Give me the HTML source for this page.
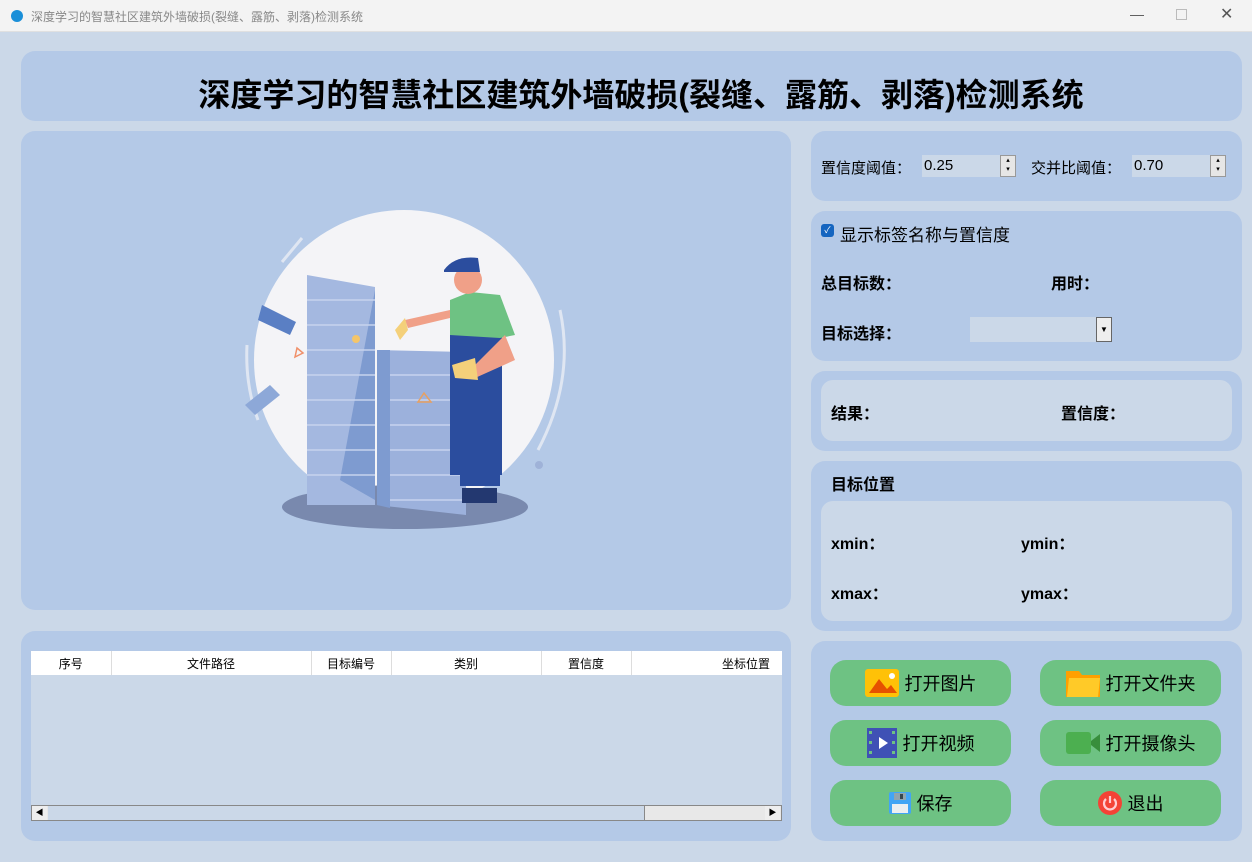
<!DOCTYPE html>
<html><head><meta charset="utf-8"><style>
*{margin:0;padding:0;box-sizing:border-box}
body{width:1252px;height:862px;background:#cbd8e8;font-family:"Liberation Sans","Noto Sans CJK SC",sans-serif;position:relative;overflow:hidden;color:#000}
.tb{position:absolute;left:0;top:0;width:1252px;height:32px;background:#f3f3f3;border-bottom:1px solid #e0e0e0}
.tb .t{position:absolute;left:31px;top:8px;font-size:12px;color:#888}
.tb .ic{position:absolute;left:11px;top:10px;width:12px;height:12px;border-radius:50%;background:#1a8fd8}
.p{position:absolute;background:#b4c9e7;border-radius:14px}
.in{position:absolute;background:#cbd8e8;border-radius:12px}
.a{position:absolute;white-space:nowrap}
.b{font-weight:bold;font-size:16px}
.spin{position:absolute;background:#cbd8e8;height:22px;font-size:15px;padding:2px 2px}
.sb{position:absolute;width:16px;height:22px;background:#e6e6e6;border:1px solid #999;font-size:7px;line-height:9px;text-align:center}
.btn{position:absolute;width:181px;height:46px;background:#6ec283;border-radius:16px;font-size:18px;display:flex;align-items:center;justify-content:center;gap:6px}
th{font-weight:normal;font-size:12px;height:24px;border-right:1px solid #ddd;background:#fff}
</style></head><body>
<div class="tb"><div class="ic"></div><div class="t">深度学习的智慧社区建筑外墙破损(裂缝、露筋、剥落)检测系统</div>
<div class="a" style="left:1130px;top:6px;font-size:14px;color:#555">—</div>
<div class="a" style="left:1176px;top:9px;width:11px;height:11px;border:1px solid #bbb"></div>
<div class="a" style="left:1220px;top:4px;font-size:16px;color:#555">✕</div></div>

<div class="p" style="left:21px;top:51px;width:1221px;height:70px"></div>
<div class="a" style="left:0;width:1282px;text-align:center;top:70px;font-size:32px;font-weight:bold">深度学习的智慧社区建筑外墙破损(裂缝、露筋、剥落)检测系统</div>

<div class="p" style="left:21px;top:131px;width:770px;height:479px"></div>
<svg class="a" style="left:230px;top:200px" width="350" height="340" viewBox="230 200 350 340">
<circle cx="404" cy="360" r="150" fill="#f4f4f7"/>
<path d="M282 262 L302 238" stroke="#dfe6f2" stroke-width="3"/>
<path d="M247 345 Q245 385 258 420" stroke="#dfe6f2" stroke-width="3" fill="none"/>
<path d="M560 310 Q575 380 538 450" stroke="#dfe6f2" stroke-width="3" fill="none"/>
<circle cx="539" cy="465" r="4" fill="#9fb2d8"/>
<ellipse cx="405" cy="507" rx="123" ry="22" fill="#7989ae"/>
<polygon points="307,275 375,287 375,505 307,505" fill="#a4b8e0"/>
<polygon points="340,480 375,290 375,500" fill="#7e9bd0"/>
<polygon points="377,350 466,352 466,515 377,505" fill="#9cb1dc"/>
<polygon points="377,350 390,350 390,508 377,505" fill="#7e9bd0"/>
<g stroke="#c6d3ee" stroke-width="1.5">
<path d="M307 300h68M307 325h68M307 350h68M307 375h68M307 400h68M307 425h68M307 450h68M307 475h68M390 375h76M390 400h76M390 425h76M390 450h76M390 475h76M390 500h76"/></g>
<polygon points="262,305 296,322 290,335 258,320" fill="#5a7fc4"/>
<polygon points="245,405 270,385 280,395 255,415" fill="#8da8d8"/>
<circle cx="356" cy="339" r="4" fill="#f4c56a"/>
<path d="M297 348 l6 5 -8 4z" stroke="#f0906a" fill="none" stroke-width="1.5"/>
<path d="M418 402 l6 -9 7 9z" stroke="#e8a060" fill="none" stroke-width="1.5"/>
<rect x="450" y="300" width="52" height="175" fill="#2b4d9e"/>
<path d="M450 300 L470 292 L500 295 L515 335 L500 338 L450 335z" fill="#6ec283"/>
<rect x="460" y="470" width="40" height="16" fill="#2b4d9e"/>
<path d="M462 488 h35 v15 h-35z" fill="#233870"/>
<circle cx="468" cy="280" r="14" fill="#f0a088"/>
<path d="M444 270 Q455 255 478 258 L480 272 L444 272z" fill="#2b4d9e"/>
<path d="M405 320 L450 310 L450 318 L408 328z" fill="#f0a088"/>
<path d="M505 335 L515 360 L475 378 L470 370z" fill="#f0a088"/>
<path d="M452 365 L475 358 L478 380 L455 378z" fill="#f4d07a"/>
<path d="M395 330 L405 318 L408 330 L400 340z" fill="#f4d07a"/>
</svg>

<div class="p" style="left:21px;top:631px;width:770px;height:210px"></div>
<div class="a" style="left:31px;top:651px;width:751px;height:170px;background:#cbd8e8">
<table style="border-collapse:collapse;width:751px"><tr><th style="width:80px">序号</th><th style="width:200px">文件路径</th><th style="width:80px">目标编号</th><th style="width:150px">类别</th><th style="width:90px">置信度</th><th style="text-align:right;padding-right:12px;border:0">坐标位置</th></tr></table>
<div class="a" style="left:0;top:154px;width:751px;height:16px;background:#e8e8e8;border:1px solid #888"></div>
<div class="a" style="left:17px;top:155px;width:597px;height:14px;background:#cbd8e8;border-right:1px solid #888"></div>
<div class="a" style="left:1px;top:155px;width:15px;height:14px;background:#eee;font-size:8px;text-align:center;line-height:14px">◀</div>
<div class="a" style="left:734px;top:155px;width:15px;height:14px;background:#eee;font-size:8px;text-align:center;line-height:14px">▶</div>
</div>

<div class="p" style="left:811px;top:131px;width:431px;height:70px"></div>
<div class="a" style="left:821px;top:157px;font-size:15px">置信度阈值：</div>
<div class="spin" style="left:922px;top:155px;width:94px">0.25</div><div class="sb" style="left:1000px;top:155px">▴<br>▾</div>
<div class="a" style="left:1031px;top:157px;font-size:15px">交并比阈值：</div>
<div class="spin" style="left:1132px;top:155px;width:94px">0.70</div><div class="sb" style="left:1210px;top:155px">▴<br>▾</div>

<div class="p" style="left:811px;top:211px;width:431px;height:150px"></div>
<div class="a" style="left:821px;top:224px;width:13px;height:13px;background:#1565c0;border-radius:3px;color:#fff;font-size:9px;text-align:center;line-height:13px">✓</div>
<div class="a" style="left:840px;top:221px;font-size:17px">显示标签名称与置信度</div>
<div class="a b" style="left:821px;top:270px">总目标数：</div>
<div class="a b" style="left:1051px;top:270px">用时：</div>
<div class="a b" style="left:821px;top:320px">目标选择：</div>
<div class="a" style="left:970px;top:317px;width:142px;height:25px;background:#cbd8e8"></div>
<div class="a" style="left:1096px;top:317px;width:16px;height:25px;background:#eee;border:1px solid #666;font-size:8px;text-align:center;line-height:23px">▼</div>

<div class="p" style="left:811px;top:371px;width:431px;height:80px"></div>
<div class="in" style="left:821px;top:380px;width:411px;height:61px"></div>
<div class="a b" style="left:831px;top:400px">结果：</div>
<div class="a b" style="left:1061px;top:400px">置信度：</div>

<div class="p" style="left:811px;top:461px;width:431px;height:170px"></div>
<div class="a b" style="left:831px;top:471px">目标位置</div>
<div class="in" style="left:821px;top:501px;width:411px;height:120px"></div>
<div class="a b" style="left:831px;top:530px">xmin：</div>
<div class="a b" style="left:1021px;top:530px">ymin：</div>
<div class="a b" style="left:831px;top:580px">xmax：</div>
<div class="a b" style="left:1021px;top:580px">ymax：</div>

<div class="p" style="left:811px;top:641px;width:431px;height:200px"></div>
<div class="btn" style="left:830px;top:660px"><svg width="34" height="28"><rect width="34" height="28" rx="3" fill="#ffc107"/><path d="M4 24 L14 10 L22 20 L26 16 L32 24z" fill="#e65100"/><circle cx="27" cy="7" r="3" fill="#fff"/></svg>打开图片</div>
<div class="btn" style="left:1040px;top:660px"><svg width="34" height="28"><path d="M0 2h13l3 4h18v22H0z" fill="#ffa000"/><path d="M3 9h31l-2 19H1z" fill="#ffca28"/></svg>打开文件夹</div>
<div class="btn" style="left:830px;top:720px"><svg width="30" height="30"><rect width="30" height="30" fill="#3f51b5"/><path d="M12 9 L21 15 L12 21z" fill="#fff"/><g fill="#6ec283"><rect x="2" y="3" width="3" height="3"/><rect x="2" y="13" width="3" height="3"/><rect x="2" y="23" width="3" height="3"/><rect x="25" y="3" width="3" height="3"/><rect x="25" y="13" width="3" height="3"/><rect x="25" y="23" width="3" height="3"/></g></svg>打开视频</div>
<div class="btn" style="left:1040px;top:720px"><svg width="34" height="22"><rect width="25" height="22" rx="3" fill="#4caf50"/><path d="M25 9 L34 2 V20 L25 13z" fill="#388e3c"/></svg>打开摄像头</div>
<div class="btn" style="left:830px;top:780px"><svg width="22" height="22"><rect width="22" height="22" rx="2" fill="#42a5f5"/><rect x="5" y="1" width="12" height="7" fill="#90a4ae"/><rect x="11" y="2" width="3" height="5" fill="#37474f"/><rect x="3" y="12" width="16" height="9" fill="#eceff1"/></svg>保存</div>
<div class="btn" style="left:1040px;top:780px"><svg width="24" height="24"><circle cx="12" cy="12" r="12" fill="#f44336"/><path d="M8 8 A6 6 0 1 0 16 8" stroke="#ffcdd2" stroke-width="2.2" fill="none"/><path d="M12 5 V12" stroke="#ffcdd2" stroke-width="2.2"/></svg>退出</div>
</body></html>
